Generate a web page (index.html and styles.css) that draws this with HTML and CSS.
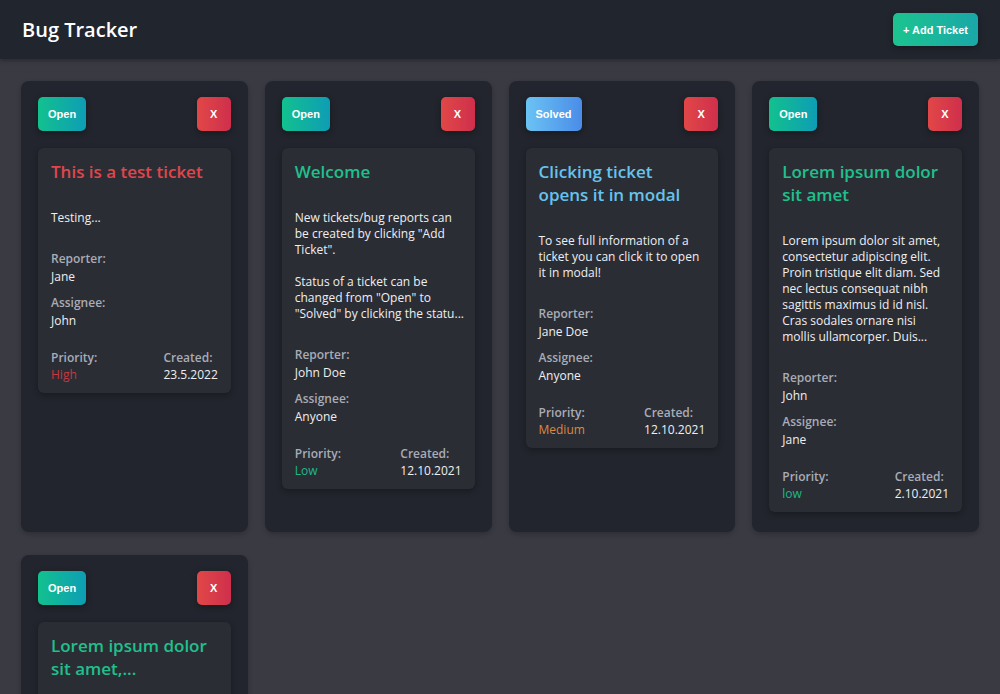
FILE: index.html
```html
<!DOCTYPE html>
<html lang="en">
<head>
<meta charset="utf-8">
<title>Bug Tracker</title>
<link rel="stylesheet" href="styles.css">
</head>
<body>
<header class="topbar">
  <h1 class="brand">Bug Tracker</h1>
  <button class="btn btn-add">+ Add Ticket</button>
</header>
<main class="board">
  <section class="card">
    <div class="card-head">
      <button class="btn badge badge-open">Open</button>
      <button class="btn badge badge-x">X</button>
    </div>
    <article class="ticket">
      <h2 class="ticket-title t-red">This is a test ticket</h2>
      <p class="ticket-desc">Testing...</p>
      <div class="field"><div class="label">Reporter:</div><div class="value">Jane</div></div>
      <div class="field"><div class="label">Assignee:</div><div class="value">John</div></div>
      <div class="ticket-foot">
        <div class="foot-col"><div class="label">Priority:</div><div class="value p-high">High</div></div>
        <div class="foot-col foot-right"><div class="label">Created:</div><div class="value">23.5.2022</div></div>
      </div>
    </article>
  </section>

  <section class="card">
    <div class="card-head">
      <button class="btn badge badge-open">Open</button>
      <button class="btn badge badge-x">X</button>
    </div>
    <article class="ticket">
      <h2 class="ticket-title t-green">Welcome</h2>
      <p class="ticket-desc">New tickets/bug reports can be created by clicking "Add Ticket".<br><br>Status of a ticket can be changed from "Open" to "Solved" by clicking the statu...</p>
      <div class="field"><div class="label">Reporter:</div><div class="value">John Doe</div></div>
      <div class="field"><div class="label">Assignee:</div><div class="value">Anyone</div></div>
      <div class="ticket-foot">
        <div class="foot-col"><div class="label">Priority:</div><div class="value p-low">Low</div></div>
        <div class="foot-col foot-right"><div class="label">Created:</div><div class="value">12.10.2021</div></div>
      </div>
    </article>
  </section>

  <section class="card">
    <div class="card-head">
      <button class="btn badge badge-solved">Solved</button>
      <button class="btn badge badge-x">X</button>
    </div>
    <article class="ticket">
      <h2 class="ticket-title t-blue">Clicking ticket opens it in modal</h2>
      <p class="ticket-desc">To see full information of a ticket you can click it to open it in modal!</p>
      <div class="field"><div class="label">Reporter:</div><div class="value">Jane Doe</div></div>
      <div class="field"><div class="label">Assignee:</div><div class="value">Anyone</div></div>
      <div class="ticket-foot">
        <div class="foot-col"><div class="label">Priority:</div><div class="value p-medium">Medium</div></div>
        <div class="foot-col foot-right"><div class="label">Created:</div><div class="value">12.10.2021</div></div>
      </div>
    </article>
  </section>

  <section class="card">
    <div class="card-head">
      <button class="btn badge badge-open">Open</button>
      <button class="btn badge badge-x">X</button>
    </div>
    <article class="ticket">
      <h2 class="ticket-title t-green">Lorem ipsum dolor sit amet</h2>
      <p class="ticket-desc">Lorem ipsum dolor sit amet, consectetur adipiscing elit. Proin tristique elit diam. Sed nec lectus consequat nibh sagittis maximus id id nisl. Cras sodales ornare nisi mollis ullamcorper. Duis...</p>
      <div class="field"><div class="label">Reporter:</div><div class="value">John</div></div>
      <div class="field"><div class="label">Assignee:</div><div class="value">Jane</div></div>
      <div class="ticket-foot">
        <div class="foot-col"><div class="label">Priority:</div><div class="value p-low">low</div></div>
        <div class="foot-col foot-right"><div class="label">Created:</div><div class="value">2.10.2021</div></div>
      </div>
    </article>
  </section>

  <section class="card">
    <div class="card-head">
      <button class="btn badge badge-open">Open</button>
      <button class="btn badge badge-x">X</button>
    </div>
    <article class="ticket">
      <h2 class="ticket-title t-green">Lorem ipsum dolor sit amet,...</h2>
      <p class="ticket-desc">Lorem ipsum dolor sit amet, consectetur adipiscing elit.</p>
      <div class="field"><div class="label">Reporter:</div><div class="value">John</div></div>
      <div class="field"><div class="label">Assignee:</div><div class="value">Jane</div></div>
      <div class="ticket-foot">
        <div class="foot-col"><div class="label">Priority:</div><div class="value p-low">low</div></div>
        <div class="foot-col foot-right"><div class="label">Created:</div><div class="value">2.10.2021</div></div>
      </div>
    </article>
  </section>
</main>
</body>
</html>
```

FILE: styles.css
```css
* { box-sizing: border-box; }

html, body {
  margin: 0;
  padding: 0;
}

body {
  background: #393a42;
  font-family: "Open Sans", "Noto Sans", sans-serif;
  color: #e6e7ea;
}

.topbar {
  height: 59px;
  background: #21252e;
  display: flex;
  align-items: center;
  justify-content: space-between;
  padding: 0 22px 0 22px;
  box-shadow: 0 2px 4px rgba(0, 0, 0, 0.25);
}

.brand {
  margin: 0;
  font-size: 20px;
  font-weight: 600;
  color: #ffffff;
  letter-spacing: 0;
}

.btn {
  border: none;
  color: #ffffff;
  font-family: "Liberation Sans", Arial, sans-serif;
  font-weight: 700;
  font-size: 11px;
  cursor: pointer;
  border-radius: 5px;
  box-shadow: 0 2px 6px rgba(0, 0, 0, 0.35);
}

.btn-add {
  height: 33px;
  padding: 0 10px;
  background: linear-gradient(90deg, #1cc48f 0%, #1aa7a8 100%);
}

.board {
  display: grid;
  grid-template-columns: repeat(4, 1fr);
  column-gap: 17px;
  row-gap: 23px;
  padding: 22px 21px 21px 21px;
}

.card {
  background: #22252d;
  border-radius: 8px;
  padding: 16px 17px 20px 17px;
  box-shadow: 0 2px 5px rgba(0, 0, 0, 0.2);
}

.card-head {
  display: flex;
  justify-content: space-between;
  align-items: center;
  margin-bottom: 17px;
}

.badge {
  height: 34px;
  padding: 0 10px;
}

.badge-open {
  background: linear-gradient(90deg, #12c18e 0%, #0e9db5 100%);
}

.badge-solved {
  background: linear-gradient(90deg, #6bc3f4 0%, #4a8ce8 100%);
}

.badge-x {
  width: 34px;
  padding: 0;
  background: linear-gradient(90deg, #e14747 0%, #cf2f4c 100%);
}

.ticket {
  background: #2b2d35;
  border-radius: 6px;
  padding: 12px 10px 10px 13px;
  box-shadow: 0 2px 6px rgba(0, 0, 0, 0.3);
}

.ticket-title {
  margin: 0 4px 0 0;
  font-size: 17px;
  line-height: 23px;
  font-weight: 600;
}

.t-red { color: #e0464b; }
.t-green { color: #20c08d; }
.t-blue { color: #66c3ee; }

.ticket-desc {
  margin: 27px 0 24px 0;
  font-size: 12px;
  line-height: 16px;
  color: #eeeff1;
}

.field {
  margin-bottom: 8px;
}

.field + .field {
  margin-bottom: 19px;
}

.label {
  font-size: 12px;
  line-height: 18px;
  font-weight: 600;
  color: #a8acb6;
}

.value {
  font-size: 12px;
  line-height: 18px;
  color: #eeeff1;
}

.ticket-foot {
  display: flex;
  justify-content: space-between;
  padding-right: 3px;
}

.ticket-foot .label,
.ticket-foot .value {
  line-height: 17px;
}

.foot-right {
  text-align: left;
}

.p-high { color: #c9373e; }
.p-medium { color: #da8a3e; }
.p-low { color: #1cb98a; }
```
